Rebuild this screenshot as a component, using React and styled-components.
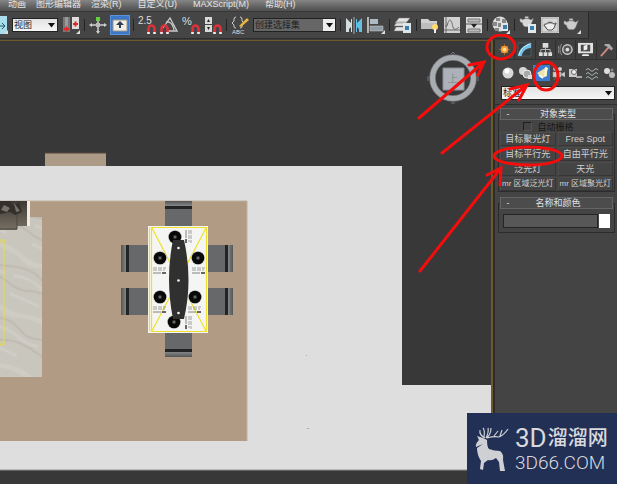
import { useState } from "react";
import styled, { createGlobalStyle, css } from "styled-components";

const GlobalStyle = createGlobalStyle`
  * {
    box-sizing: border-box;
  }

  body {
    margin: 0;
    background: #383838;
    font-family: "Liberation Sans", "Noto Sans CJK SC", sans-serif;
    font-size: 9px;
    color: #d2d2d2;
  }

  button, input, select {
    margin: 0;
    padding: 0;
    border: 0;
    font: inherit;
    color: inherit;
    background: none;
  }
`;

const Wrapper = styled.div`
  position: relative;
  display: flex;
  flex-direction: column;
  min-height: 100vh;
  overflow: hidden;
`;

const MenuBar = styled.nav`
  display: flex;
  gap: 16px;
  height: 11px;
  padding-left: 8px;
  background: linear-gradient(#858585, #626262 60%, #505050);
`;

const MenuGroup = styled.div`
  display: flex;
  gap: ${({ $gap }) => `${$gap}px`};
`;

const MenuItem = styled.button`
  line-height: 9px;
  height: 9px;
  color: #e4e4e4;
  white-space: nowrap;
`;

const ToolbarWrapper = styled.div`
  display: flex;
  height: 29px;
  background: #3c3c3c;
  border-top: 1px solid #383838;
`;

const Toolbar = styled.div`
  display: flex;
  align-items: center;
  gap: 4px;
  height: 27px;
  padding-right: 7px;
  background: #454545;
  border-right: 1px solid #2a2a2a;
  border-bottom: 1px solid #2e2e2e;
`;

const Separator = styled.span`
  width: 1px;
  height: 12px;
  background: #232323;
`;

const Tool = styled.button`
  display: flex;
  justify-content: flex-end;
  width: ${({ $half }) => ($half ? "8px" : "18px")};
  height: 18px;
  overflow: hidden;

  svg {
    flex: none;
    width: 18px;
    height: 18px;
  }

  ${({ $active }) =>
    $active &&
    css`
      background: #3d78c8;
      box-shadow: 0 0 0 1px #5b93dc;
    `}
`;

const SelectBox = styled.label`
  display: grid;
  align-items: center;
  width: ${({ $width }) => $width || "auto"};
  height: 14px;
  border: 1px solid #222;
  background: ${({ $dark }) =>
    $dark
      ? "linear-gradient(to right, #666 calc(100% - 12px), #eee 0)"
      : "linear-gradient(#e2e2e2, #f6f6f6)"};
  color: #1d1d1d;

  select,
  svg {
    grid-area: 1 / 1;
  }

  select {
    appearance: none;
    width: 100%;
    height: 12px;
    line-height: 12px;
    padding-left: 1px;
  }

  svg {
    justify-self: end;
    width: 7px;
    height: 5px;
    margin-right: 2px;
    pointer-events: none;
  }
`;

const Content = styled.div`
  display: flex;
  flex: 1;
`;

const Viewport = styled.main`
  display: flex;
  flex: 1;
  min-width: 0;
  border-top: 1px solid #6b5a2c;
  border-right: 2px solid #6b5a2c;

  svg {
    width: 100%;
    height: auto;
    min-height: 100%;
  }
`;

const Panel = styled.aside`
  flex: none;
  width: 124px;
  background: #444;
  border-left: 2px solid #2d2d2d;
`;

const TabRow = styled.div`
  display: grid;
  grid-template-columns: repeat(6, 1fr);
  height: 20px;
  border-bottom: 1px solid #303030;
`;

const Tab = styled.button`
  display: flex;
  align-items: center;
  justify-content: center;
  border-right: 1px solid #303030;
  background: ${({ $active }) => ($active ? "#444" : "#3f3f3f")};

  svg {
    width: 15px;
    height: 15px;
  }
`;

const CategoryRow = styled.div`
  display: grid;
  grid-template-columns: repeat(7, 1fr);
  height: 16px;
  margin: 5px 0 5px 5px;
`;

const Category = styled.button`
  display: flex;
  align-items: center;
  justify-content: center;
  background: ${({ $active }) => ($active ? "#3d7bd0" : "none")};

  svg {
    width: 14px;
    height: 14px;
  }
`;

const PanelSelect = styled.div`
  padding: 0 2px 0 6px;
`;

const Rollups = styled.div`
  display: flex;
  flex-direction: column;
  gap: 11px;
  margin-top: 4px;
  padding: 9px 2px 0 3px;
  border-top: 1px solid #2f2f2f;
`;

const Rollup = styled.section`
  border: 1px solid #2c2c2c;
  padding: 0 1px;
`;

const RollupTitle = styled.button`
  display: grid;
  grid-template-columns: 8px 1fr 8px;
  align-items: center;
  width: 100%;
  height: 12px;
  margin-top: -7px;
  padding-left: 3px;
  border: 1px solid #656565;
  background: #4c4c4c;
  line-height: 10px;
  color: #e2e2e2;
`;

const AutoGrid = styled.label`
  display: flex;
  align-items: center;
  justify-content: center;
  gap: 5px;
  height: 12px;
  padding-right: 16px;
  color: #161616;

  input {
    appearance: none;
    width: 9px;
    height: 9px;
    border: 1px solid #202020;
    border-right-color: #555;
    border-bottom-color: #555;
  }
`;

const ObjectGrid = styled.div`
  display: grid;
  grid-template-columns: repeat(2, minmax(0, 1fr));
  gap: 1px 2px;
`;

const ObjectButton = styled.button`
  display: flex;
  justify-content: center;
  height: 14px;
  border: 1px solid;
  border-color: #4c4c4c #363636 #363636 #4c4c4c;
  font-size: ${({ $small }) => ($small ? "8px" : "9px")};
  line-height: 12px;
  white-space: nowrap;
  color: #cfcfcf;
`;

const NameRow = styled.div`
  display: flex;
  gap: 1px;
  padding: 5px 3px 4px;

  input[type="text"] {
    flex: 1;
    min-width: 0;
    height: 14px;
    border: 1px solid #242424;
    background: #575757;
  }

  input[type="color"] {
    appearance: none;
    width: 11px;
    height: 14px;
    background: #fff;
  }

  input::-webkit-color-swatch-wrapper {
    padding: 0;
  }

  input::-webkit-color-swatch {
    border: 0;
  }
`;

const Marks = styled.svg`
  position: absolute;
  top: 34px;
  right: 0;
  width: 200px;
  height: 250px;
  pointer-events: none;
`;

const Brand = styled.a`
  position: absolute;
  right: 0;
  bottom: 0;
  display: flex;
  align-items: center;
  gap: 6px;
  width: 150px;
  height: 71px;
  padding-left: 8px;
  background: #223056;
  color: #d8d9dc;
  text-decoration: none;

  svg {
    width: 34px;
    height: 46px;
  }
`;

const BrandText = styled.div`
  display: flex;
  flex-direction: column;
  gap: 3px;
  font-family: Roboto, "Noto Sans CJK SC", sans-serif;
`;

const BrandName = styled.span`
  display: flex;
  align-items: center;
  gap: 1px;
  height: 24px;
  font-size: 20px;
  line-height: 24px;
  font-weight: 500;

  b {
    font-size: 26px;
    font-weight: 400;
  }
`;

const BrandSite = styled.span`
  font-size: 19px;
  line-height: 19px;
  font-weight: 300;
`;

const Arrow = () => (
  <svg viewBox="0 0 7 5">
    <path d="M0 0h7L3.5 4.5z" fill="#111" />
  </svg>
);

const Corner = () => <path d="M18 14v4h-4z" fill="#ddd" />;

const Magnet = ({ x = 9, y = 8 }) => (
  <g transform={`translate(${x} ${y})`} fill="none" strokeWidth="2.6">
    <path d="M1.500 9V4.500a3 3 0 0 1 6 0V9" stroke="#dd3038" />
    <path d="M1.500 10V8M7.500 10V8" stroke="#eee" />
  </g>
);

const Teapot = ({ fill = "#d8d8d8" }) => (
  <g fill={fill} stroke="#888" strokeWidth=".5">
    <path d="M4 7c2-2 8-2 10 0l3-2-2 5c-1 3-2 4-3 5H7c-2-1-3-3-3-5C2 10 1 9 1 7s2-2 3 0z" />
    <path d="M7 5h4v-2H7z" />
  </g>
);

const tools = {
  scale: (
    <>
      <path d="M9 0h8v18H9z" fill="#a9ddeb" />
      <path d="M9 10h5M12 7l3 3-3 3" stroke="#24566a" fill="none" />
      <Corner />
    </>
  ),
  pivot: (
    <>
      <path d="M1 1h7v15H1z" fill="#777" />
      <path d="M3 1h3v12H3z" fill="#999" />
      <path d="M10 1h7v12h-7z" fill="#dedede" />
      <path d="M2 13h5M4.500 10.500v5M11 8h5M13.500 5.500v5" stroke="#e02828" strokeWidth="2" />
      <Corner />
    </>
  ),
  move: (
    <>
      <path d="M2 9h14M9 3v13" stroke="#d0d0d0" strokeWidth="1.500" />
      <path d="M0 9l3-2v4zM18 9l-3-2v4zM9 18l-2-3h4z" fill="#d0d0d0" />
      <path d="M7 1h4v4H7z" fill="#63d13c" />
      <path d="M7 7h4v4H7z" fill="#bbb" />
    </>
  ),
  keyboard: (
    <>
      <path d="M2 4h14v11H2z" fill="#f2eee5" stroke="#9a9689" />
      <path d="M9 5l4 4h-3v3H8V9H5z" fill="#2d3d50" />
    </>
  ),
  snap: (
    <>
      <text x="0" y="8" fontSize="10" fill="#ddd">2.5</text>
      <Magnet />
    </>
  ),
  angle: (
    <>
      <path d="M3 12L10 2l7 13H8M6 6c5-1 7 3 8 8" fill="none" stroke="#c9c9c9" strokeWidth="1.300" />
      <Magnet x={0} />
    </>
  ),
  percent: (
    <>
      <text x="0" y="9" fontSize="11" fill="#ddd">%</text>
      <Magnet />
    </>
  ),
  spinner: (
    <>
      <path d="M1 1h7v7H1zM1 9h7v7H1z" fill="#d9d9d9" />
      <path d="M3 6l1.500-3L6 6zM3 11h3l-1.500 3z" fill="#222" />
      <Magnet />
    </>
  ),
  sets: (
    <>
      <path d="M5 1Q3 1 3 3v2L1 7l2 2v2q0 1 2 1M9 1q2 0 2 2v2l2 2-2 2v2q0 1-2 1" fill="none" stroke="#ccc" />
      <path d="M8 10l8-8 2 2-8 7z" fill="#e9b83d" />
      <text x="1" y="18" fontSize="6" fill="#ddd">ABC</text>
    </>
  ),
  mirror: (
    <>
      <path d="M1 2l5 5V3h1v13H6v-5l-2 2v3H1z" fill="#d4dde0" />
      <path d="M17 2l-5 5V3h-1v13h1v-5l2 2v3h3z" fill="#62bfe5" />
      <path d="M9 1v17" stroke="#aaa" />
    </>
  ),
  align: (
    <>
      <path d="M1 1v16" stroke="#ddd" strokeWidth="1.500" />
      <path d="M3 3h8v5H3z" fill="#aebbc5" />
      <path d="M3 10h13v5H3z" fill="#929ca5" stroke="#ccc" strokeWidth=".5" />
      <Corner />
    </>
  ),
  layers: (
    <>
      <path d="M5 2h11l-4 5H1zM3 6h10l-3 4H0zM2 11h9l-2 4H0z" fill="#e4e4e4" stroke="#777" strokeWidth=".5" />
      <path d="M9 7h8v10H9z" fill="#dce7ed" />
      <path d="M11 10h4v4h-4z" fill="#407ca8" />
    </>
  ),
  folder: (
    <>
      <path d="M0 3h7l2 2h7v8H0z" fill="#d0d0d0" />
      <path d="M0 7h16v6H0z" fill="#bcbcbc" />
      <circle cx="14" cy="11" r="3" fill="#ffdc69" />
      <path d="M13 13h2v4h-2z" fill="#eee" />
    </>
  ),
  curve: (
    <>
      <path d="M1 1h16v16H1z" fill="#d1d1d1" />
      <path d="M3 1v16M1 14h16M2 10h2c3-12 5-3 6 1s4 2 6 0" fill="none" stroke="#666" />
    </>
  ),
  schematic: (
    <>
      <path d="M1 1h16v16H1z" fill="#d8d8d8" />
      <path d="M3 3h12v3H3zM3 13h12v3H3z" fill="#bbb" stroke="#777" />
      <path d="M1 8h16" stroke="#555" />
      <path d="M6 8h6l-3 4z" fill="#222" />
    </>
  ),
  material: (
    <>
      <circle cx="8" cy="8" r="7.500" fill="#ddd" />
      <path d="M4 2h4v3H4zM10 3h4v4h-4zM1 6h4v4H1zM6 7h4v4H6zM3 12h4v3H3z" fill="#888" />
      <path d="M9 7h7v8H9z" fill="#dce7ed" />
      <path d="M11 9h4v4h-4z" fill="#407ca8" />
      <Corner />
    </>
  ),
  renderSetup: (
    <>
      <g transform="translate(0 -2) scale(.85)"><Teapot /></g>
      <path d="M9 8h8v9H9z" fill="#e0e9ed" />
      <path d="M11 10h4v4h-4z" fill="#407ca8" />
    </>
  ),
  renderFrame: (
    <>
      <path d="M0 1h18v16H0z" fill="#d8d8d8" />
      <path d="M1 2h16v14H1z" fill="none" stroke="#aaa" />
      <g transform="translate(2 3) scale(.8)"><Teapot fill="#eee" /></g>
      <path d="M5 8c2-2 6-2 8 0l2-1-2 5-2 2H7l-2-2-2-3 2-1" fill="none" stroke="#555" />
    </>
  ),
  render: (
    <>
      <g transform="scale(.9)"><Teapot fill="#ccc" /></g>
      <Corner />
    </>
  ),
};

const ToolIcon = ({ name }) => <svg viewBox="0 0 18 18">{tools[name]}</svg>;

const tabs = [
  {
    name: "create",
    icon: (
      <>
        <path d="M8 2v12M2 8h12M4 4l8 8M12 4l-8 8" stroke="#a45f20" />
        <circle cx="8" cy="8" r="4" fill="#f59a2c" />
        <circle cx="8" cy="8" r="2" fill="#ffe293" />
      </>
    ),
  },
  {
    name: "modify",
    icon: (
      <>
        <path d="M1 1h14v14H1z" fill="#343d42" stroke="#777" strokeWidth=".5" />
        <path d="M1 15C2 8 7 3 15 1v5C9 7 6 10 5 15z" fill="#75bfe9" />
        <path d="M2 14C4 7 8 4 14 2" stroke="#d6eef8" fill="none" />
      </>
    ),
  },
  {
    name: "hierarchy",
    icon: (
      <>
        <path d="M5 1h6v5H5zM1 11h4v4H1zM6 11h4v4H6zM11 11h4v4h-4z" fill="#ddd" />
        <path d="M8 6v5M3 11V8h10v3" fill="none" stroke="#bbb" />
      </>
    ),
  },
  {
    name: "motion",
    icon: (
      <>
        <circle cx="10" cy="8" r="5" fill="#555" stroke="#ccc" strokeWidth="1.500" />
        <circle cx="10" cy="8" r="2" fill="#ddd" />
        <path d="M4 2q-4 6 0 12M1 4q-2 4 0 8" fill="none" stroke="#999" />
      </>
    ),
  },
  {
    name: "display",
    icon: (
      <>
        <path d="M0 1h16v11H0z" fill="#e1e1e1" />
        <path d="M3 3h10v7H3z" fill="#4b4b4b" />
        <path d="M6 4l4-1v5l-4 1zM5 13h6l1 2H4z" fill="#eee" />
      </>
    ),
  },
  {
    name: "utilities",
    icon: (
      <>
        <path d="M2 15L11 5" stroke="#cf8a82" strokeWidth="2" />
        <path d="M6 2h5l4 5-2 2-4-4-3-1z" fill="#aaa" />
      </>
    ),
  },
];

const categories = [
  {
    name: "geometry",
    icon: (
      <>
        <circle cx="7" cy="7" r="5.500" fill="#d8d8d8" />
        <circle cx="6" cy="5" r="2.500" fill="#fff" />
      </>
    ),
  },
  {
    name: "shapes",
    icon: (
      <>
        <circle cx="5" cy="5" r="4" fill="#d5d5d5" />
        <circle cx="9" cy="8" r="4" fill="#a8a8a8" stroke="#eee" />
        <path d="M10 9h4v4h-4z" fill="#ddd" />
      </>
    ),
  },
  {
    name: "lights",
    icon: (
      <>
        <path d="M12 1L2 7l5 5 5-2z" fill="#eee2ad" />
        <path d="M10 1l3 1-2 8-2 1z" fill="#fff7cf" />
        <path d="M4 9l4 3" stroke="#fff" strokeWidth="2" />
      </>
    ),
  },
  {
    name: "cameras",
    icon: (
      <>
        <circle cx="4" cy="3" r="2" fill="#aaa" />
        <circle cx="9" cy="3" r="2" fill="#ccc" />
        <path d="M2 6h8v5H2zM10 8l4-2v5l-4-2zM5 11l-2 3M8 11l2 3" fill="#ccc" stroke="#999" strokeWidth=".5" />
      </>
    ),
  },
  {
    name: "helpers",
    icon: (
      <>
        <path d="M1 3h8v8H1z" fill="#ccc" />
        <circle cx="6" cy="6" r="2.500" fill="#eee" stroke="#666" />
        <path d="M8 10h6v2H8z" fill="#aaa" />
      </>
    ),
  },
  {
    name: "warps",
    icon: (
      <path
        d="M1 4q2-3 4 0t4 0 4 0M1 8q2-3 4 0t4 0 4 0M1 12q2-3 4 0t4 0 4 0"
        fill="none"
        stroke="#aab4b2"
      />
    ),
  },
  {
    name: "systems",
    icon: (
      <>
        <circle cx="5" cy="5" r="3" fill="#ddd" />
        <circle cx="10" cy="9" r="3" fill="#bbb" />
        <circle cx="10" cy="4" r="1.500" fill="#888" />
      </>
    ),
  },
];

const objectTypes = [
  "目标聚光灯",
  "Free Spot",
  "目标平行光",
  "自由平行光",
  "泛光灯",
  "天光",
  "mr 区域泛光灯",
  "mr 区域聚光灯",
];

const plates = [
  [175, 237],
  [160, 258],
  [198, 258],
  [160, 297],
  [195, 297],
  [174, 322],
];

// each entry is the corner of one set of cutlery and its rotation
const cutlery = [
  [153, 268, 0],
  [192, 268, 0],
  [153, 307, 0],
  [188, 307, 0],
  [191, 230, 90],
  [191, 316, 90],
];

const Chair = ({ x, y, rotate }) => (
  <g transform={`translate(${x} ${y}) rotate(${rotate})`}>
    <path d="M-13-13h27v27h-27z" fill="#676869" />
    <path d="M-13-13h5v27h-5z" fill="url(#chairBack)" />
    <path d="M-8-13h3v27h-3z" fill="#242424" />
  </g>
);

const FloorPlan = () => (
  <svg viewBox="0 41 491 443" preserveAspectRatio="xMinYMin slice">
    <defs>
      <linearGradient id="chairBack">
        <stop stopColor="#555" />
        <stop offset="1" stopColor="#858688" />
      </linearGradient>
      <linearGradient id="sofa" x2="0" y2="1">
        <stop stopColor="#3d3933" />
        <stop offset="1" stopColor="#777064" />
      </linearGradient>
      <pattern id="marble" width="60" height="54" patternUnits="userSpaceOnUse" patternTransform="rotate(24)">
        <path d="M0 0h60v54H0z" fill="#c9c6be" />
        <path d="M0 6q14 6 30 1t30-1v5q-20-4-34 2T0 10z" fill="#cfccc4" />
        <path d="M0 22q20-6 32 1t28-1M0 38q15 5 25 0t35 0" fill="none" stroke="#c0bbb1" strokeWidth="2" />
        <path d="M4 30q18-4 28 0t24 1M8 48h32" fill="none" stroke="#d0cdc6" strokeWidth="3" />
      </pattern>
    </defs>

    <path d="M0 41h491v443H0z" fill="#383838" />
    <path d="M45 153h61v14H45z" fill="#ad9a86" />
    <path d="M45 153h61" stroke="#57463b" />
    <path d="M0 166h402v219h89v85H0z" fill="#dedede" />
    <path d="M0 470h491" stroke="#919191" />
    <path d="M0 201h247v240H0z" fill="#b19b84" />
    <path d="M0 201h247v240" fill="none" stroke="#bdb09f" />

    <path d="M0 217h42v160H0z" fill="url(#marble)" />
    <path d="M0 240h4v105H0M0 243l4-3M0 342l4 3" fill="none" stroke="#e4dc43" />
    <path d="M27 201h3v25h-3z" fill="#f0ebe2" />
    <path d="M0 201h27v25H17v4H0z" fill="url(#sofa)" />
    <path d="M0 201h10l4 5 5-4 3 10-7 3-5-3-10 2z" fill="#33302c" />
    <path d="M4 205l6 3-3 4-6-2zM14 203l6 8-4 1z" fill="#777168" />
    <path d="M0 229h17v-15" fill="none" stroke="#4d463f" />

    <Chair x={179} y={214} rotate={90} />
    <Chair x={178} y={344} rotate={-90} />
    <Chair x={134} y={258} rotate={0} />
    <Chair x={134} y={301} rotate={0} />
    <Chair x={220} y={259} rotate={180} />
    <Chair x={220} y={302} rotate={180} />

    <path d="M148 226h60v107h-60z" fill="#f5f5f3" />
    <path
      d="M151.500 227.500h55v104h-55zM149.500 227.500v104M152 228l54 103M206 228l-54 103"
      fill="none"
      stroke="#efe12c"
      strokeWidth="1.200"
    />
    {plates.map(([cx, cy]) => (
      <g key={`${cx}-${cy}`}>
        <circle cx={cx} cy={cy} r="7" fill="#d2d2d2" />
        <circle cx={cx} cy={cy} r="6.300" fill="#080808" />
        <circle cx={cx} cy={cy} r="2" fill="#3b3b3b" />
        <circle cx={cx} cy={cy} r="1" fill="#777" />
      </g>
    ))}
    {cutlery.map(([x, y, rotate]) => (
      <g key={`${x}-${y}`} transform={`translate(${x} ${y}) rotate(${rotate})`} stroke="#666">
        <path d="M0 0h13M0 2h12" strokeWidth=".6" strokeDasharray="4 1" />
        <path d="M0 5h8" strokeWidth=".8" />
        <path d="M9 5h4" strokeWidth="2" />
      </g>
    ))}
    <path d="M173 240h11q9 40 0 79h-11q-8-40 0-79z" fill="#303030" />
    <g fill="#f4f4f4">
      <circle cx="178.500" cy="248" r="1.300" />
      <circle cx="178.500" cy="280.500" r="1.300" />
      <circle cx="178.500" cy="313" r="1.300" />
    </g>
    <path d="M306 355h1v1h-1zM307 428h2v1h-2z" fill="#aaa" />

    <circle cx="453" cy="78" r="20.500" fill="none" stroke="#74777b" strokeWidth="6.500" />
    <circle cx="453" cy="78" r="20.500" fill="none" stroke="#a9acb1" strokeWidth="5" />
    <path d="M443 68h21v22h-21z" fill="#adb1b9" stroke="#898d94" />
    <text x="453" y="83" fontSize="11" textAnchor="middle" fill="#84938f">上</text>
    <path d="M451 54l2-2 2 2M451 103h4M428 76v5M478 76v5" fill="none" stroke="#6e757c" />
  </svg>
);

const Deer = () => (
  <svg viewBox="0 0 34 46">
    <path
      d="M8 18L1 21Q0 18 4 14L2 10l6 2 4 2q0 7 2 9 5 2 11 2 4 3 3 9l2 11h-5l-1-9-3-4q-4 3-8 2l-4 3-1 7-3-1 1-8q-4-6-4-13z"
      fill="#ced0d4"
    />
    <path
      d="M10 12Q4 9 5 4M9 11Q10 4 8 2M11 12q3-6 2-10M11 12q5-3 5-10M12 12q7-2 12-1 5-2 9-8M19 10l4-5M25 10l2-6"
      fill="none"
      stroke="#ced0d4"
      strokeWidth="1.200"
    />
  </svg>
);

const App = () => {
  const [category, setCategory] = useState("lights");
  const [tab, setTab] = useState("create");

  return (
    <>
      <GlobalStyle />
      <Wrapper>
        <MenuBar>
          <MenuGroup $gap={10}>
            <MenuItem>动画</MenuItem>
            <MenuItem>图形编辑器</MenuItem>
            <MenuItem>渲染(R)</MenuItem>
          </MenuGroup>
          <MenuGroup $gap={16}>
            <MenuItem>自定义(U)</MenuItem>
            <MenuItem>MAXScript(M)</MenuItem>
            <MenuItem>帮助(H)</MenuItem>
          </MenuGroup>
        </MenuBar>

        <ToolbarWrapper>
          <Toolbar>
            <Tool $half aria-label="scale"><ToolIcon name="scale" /></Tool>
            <SelectBox $width="46px">
              <select aria-label="coordinate system">
                <option>视图</option>
              </select>
              <Arrow />
            </SelectBox>
            <Tool aria-label="pivot"><ToolIcon name="pivot" /></Tool>
            <Separator />
            <Tool aria-label="move"><ToolIcon name="move" /></Tool>
            <Tool $active aria-label="keyboard"><ToolIcon name="keyboard" /></Tool>
            <Separator />
            {["snap", "angle", "percent", "spinner"].map((name) => (
              <Tool key={name} aria-label={name}><ToolIcon name={name} /></Tool>
            ))}
            <Separator />
            <Tool aria-label="sets"><ToolIcon name="sets" /></Tool>
            <SelectBox $width="83px" $dark>
              <select aria-label="selection sets">
                <option>创建选择集</option>
              </select>
              <Arrow />
            </SelectBox>
            <Separator />
            <Tool aria-label="mirror"><ToolIcon name="mirror" /></Tool>
            <Tool aria-label="align"><ToolIcon name="align" /></Tool>
            <Separator />
            <Tool aria-label="layers"><ToolIcon name="layers" /></Tool>
            <Separator />
            {["folder", "curve", "schematic"].map((name) => (
              <Tool key={name} aria-label={name}><ToolIcon name={name} /></Tool>
            ))}
            <Separator />
            <Tool aria-label="material"><ToolIcon name="material" /></Tool>
            <Separator />
            {["renderSetup", "renderFrame", "render"].map((name) => (
              <Tool key={name} aria-label={name}><ToolIcon name={name} /></Tool>
            ))}
          </Toolbar>
        </ToolbarWrapper>

        <Content>
          <Viewport>
            <FloorPlan />
          </Viewport>

          <Panel>
            <TabRow>
              {tabs.map((data) => (
                <Tab
                  key={data.name}
                  aria-label={data.name}
                  $active={tab === data.name}
                  onClick={() => setTab(data.name)}
                >
                  <svg viewBox="0 0 16 16">{data.icon}</svg>
                </Tab>
              ))}
            </TabRow>
            <CategoryRow>
              {categories.map((data) => (
                <Category
                  key={data.name}
                  aria-label={data.name}
                  $active={category === data.name}
                  onClick={() => setCategory(data.name)}
                >
                  <svg viewBox="0 0 14 14">{data.icon}</svg>
                </Category>
              ))}
            </CategoryRow>
            <PanelSelect>
              <SelectBox>
                <select aria-label="light type">
                  <option>标准</option>
                </select>
                <Arrow />
              </SelectBox>
            </PanelSelect>

            <Rollups>
              <Rollup>
                <RollupTitle>
                  <span>-</span>
                  <span>对象类型</span>
                </RollupTitle>
                <AutoGrid>
                  <input type="checkbox" />
                  自动栅格
                </AutoGrid>
                <ObjectGrid>
                  {objectTypes.map((name) => (
                    <ObjectButton key={name} $small={name.startsWith("mr")}>
                      {name}
                    </ObjectButton>
                  ))}
                </ObjectGrid>
              </Rollup>

              <Rollup>
                <RollupTitle>
                  <span>-</span>
                  <span>名称和颜色</span>
                </RollupTitle>
                <NameRow>
                  <input type="text" aria-label="名称" />
                  <input type="color" aria-label="颜色" defaultValue="#ffffff" />
                </NameRow>
              </Rollup>
            </Rollups>
          </Panel>
        </Content>

        <Marks viewBox="417 34 200 250" fill="none" stroke="#f40d0d" strokeWidth="3" strokeLinecap="round">
          <ellipse cx="501" cy="47" rx="14" ry="12" />
          <ellipse cx="546" cy="76" rx="12" ry="14" />
          <ellipse cx="528" cy="156" rx="34" ry="9" />
          <path d="M419 118l65-56M469 65l15-3-6 13" />
          <path d="M442 153l85-68M510 89l17-4-8 15" />
          <path d="M420 271l81-103M487 175l14-7-1 17" />
        </Marks>

        <Brand href="#">
          <Deer />
          <BrandText>
            <BrandName>
              <b>3D</b>溜溜网
            </BrandName>
            <BrandSite>3D66.COM</BrandSite>
          </BrandText>
        </Brand>
      </Wrapper>
    </>
  );
};

export default App;
